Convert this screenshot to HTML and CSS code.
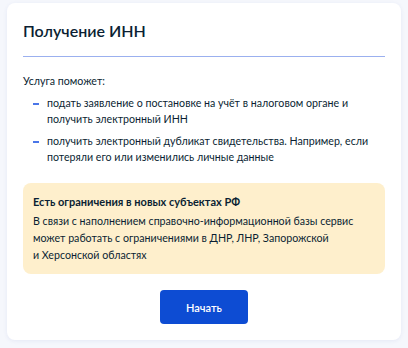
FILE: index.html
```html
<!DOCTYPE html>
<html lang="ru">
<head>
    <meta charset="UTF-8" />
    <link rel="stylesheet" href="styles.css">
</head>
<body>
    <section class="card">
        <h1 class="title">Получение ИНН</h1>
        <div class="divider"></div>

        <p class="lead">Услуга поможет:</p>
        <ul class="points">
            <li>подать заявление о постановке на учёт в налоговом органе и получить электронный ИНН</li>
            <li>получить электронный дубликат свидетельства. Например, если потеряли его или изменились личные данные</li>
        </ul>

        <div class="notice">
            <div class="notice-title">Есть ограничения в новых субъектах РФ</div>
            <div class="notice-text">В связи с наполнением справочно-информационной базы сервис может работать с ограничениями в ДНР, ЛНР, Запорожской<br>и Херсонской областях</div>
        </div>

        <div class="actions">
            <button class="start">Начать</button>
        </div>
    </section>
</body>
</html>
```

FILE: styles.css
```css
html,
body {
    margin: 0;
    padding: 0;
    height: 100%;
}
body {
    background: #f5f7fc;
    font-family: Lato, "Noto Sans", sans-serif;
    color: #0b1f33;
    padding: 3px 7px 0;
    box-sizing: border-box;
}
.card {
    width: 394px;
    box-sizing: border-box;
    background: #fff;
    border-radius: 8px;
    box-shadow: 0 1px 4px rgba(40, 70, 160, 0.08);
    padding: 17px 16px 16px;
}
.title {
    margin: 0;
    font-size: 16px;
    line-height: 22px;
    font-weight: 600;
}
.divider {
    height: 1px;
    background: #9bb0ef;
    margin: 14px 0 16px;
}
.lead {
    margin: 0 0 6px;
    font-size: 10.65px;
    line-height: 16px;
}
.points {
    list-style: none;
    margin: 0;
    padding: 0;
}
.points li {
    position: relative;
    padding-left: 24px;
    font-size: 10.65px;
    line-height: 16px;
    margin-bottom: 6px;
}
.points li::before {
    content: "";
    position: absolute;
    left: 10px;
    top: 8px;
    width: 6px;
    height: 2px;
    background: #4a76e8;
}
.notice {
    margin-top: 18px;
    background: #feefcc;
    border-radius: 8px;
    padding: 11px 10px 11px;
}
.notice-title {
    font-size: 11px;
    line-height: 16px;
    font-weight: 700;
    margin-bottom: 2px;
}
.notice-text {
    font-size: 10.65px;
    line-height: 17px;
}
.actions {
    display: flex;
    justify-content: center;
    margin-top: 16px;
}
.start {
    width: 88px;
    height: 34px;
    border: none;
    border-radius: 4px;
    background: #0d4cd3;
    color: #fff;
    font-family: Lato, "Noto Sans", sans-serif;
    font-size: 11px;
    font-weight: 600;
}
```
